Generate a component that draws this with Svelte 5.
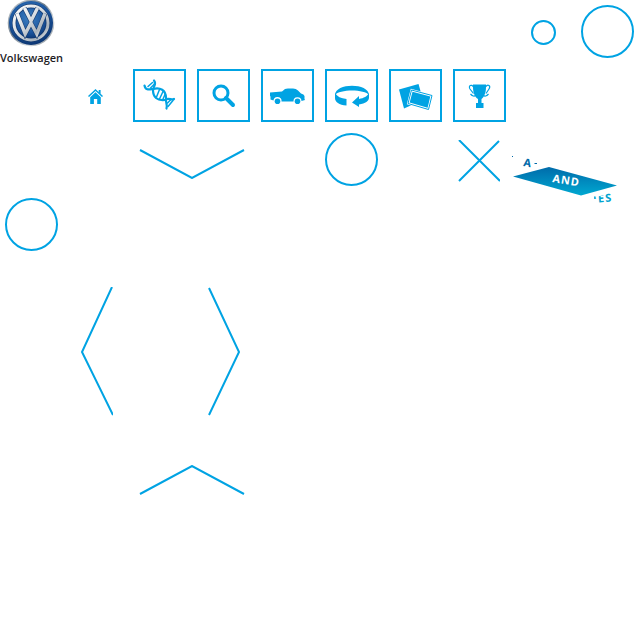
<script>
  const tiles = ['Technology', 'Search', 'Models', '360 view', 'Gallery', 'Awards'];
</script>

<main>
  <header>
    <a class="brand" href="#home">
      <svg width="62" height="47" viewBox="0 0 62 47" aria-hidden="true">
        <defs>
          <linearGradient id="rim" x2="1" y2="1">
            <stop stop-color="#d5dade" /><stop offset=".45" stop-color="#6c7b88" /><stop offset=".7" stop-color="#dfe3e6" /><stop offset="1" stop-color="#5a6670" />
          </linearGradient>
          <radialGradient id="blue" cx=".45" cy=".35" r=".7">
            <stop stop-color="#3d7fc1" /><stop offset=".6" stop-color="#1c57a0" /><stop offset="1" stop-color="#082d66" />
          </radialGradient>
          <linearGradient id="chrome" x2="1" y2="1">
            <stop stop-color="#fff" /><stop offset=".5" stop-color="#d3d9de" /><stop offset=".8" stop-color="#a9b3bc" /><stop offset="1" stop-color="#f2f4f5" />
          </linearGradient>
        </defs>
        <circle cx="31" cy="23" r="23.3" fill="url(#rim)" />
        <circle cx="31" cy="23" r="22" fill="url(#blue)" />
        <circle cx="31" cy="23" r="17" fill="url(#blue)" stroke="#12386d" stroke-width="4.4" />
        <circle cx="31" cy="23" r="17" fill="none" stroke="url(#chrome)" stroke-width="3" />
        <g fill="none" stroke-linejoin="miter" stroke-miterlimit="8">
          <path d="M24.5 8L31 21L37.5 8M17 13.5L25.2 34L31 23L36.8 34L45 13.5" stroke="#173c70" stroke-width="4.6" />
          <path d="M24.5 8L31 21L37.5 8M17 13.5L25.2 34L31 23L36.8 34L45 13.5" stroke="url(#chrome)" stroke-width="3.4" />
        </g>
      </svg>
      <span>Volkswagen</span>
    </a>
    <div class="rings">
      <button class="ring small" aria-label="Marker"></button>
      <button class="ring" aria-label="Close"></button>
    </div>
  </header>

  <nav>
    <a class="home" href="#home" aria-label="Home">
      <svg width="15" height="16" viewBox="0 0 15 16">
        <path d="M0 8.1L7.5 1L10.7 4V2H12.6V5.8L15 8.1L14 9.1L7.5 3L1 9.1Z" />
        <path d="M2.2 9.2L7.5 4.3L12.8 9.2V16H9.2V11H5.9V16H2.2Z" />
      </svg>
    </a>
    {#each tiles as name, i}
      <a class="tile" href="#{name}" aria-label={name}>
        <svg width="49" height="49" viewBox="0 0 49 49">
          {#if i === 0}
            <g fill="none" stroke="#00a3e3" stroke-linecap="round">
              <path d="M9.5 14.5C10.5 19.5 14 18.5 18 18C25 16 31 19 31 27C30 31 33 34 31.5 37.5" stroke-width="2.2" />
              <path d="M19 9.5C22 13 18.5 15 18 19C18 26 22 30 30 29C33 26 37 29.5 39 28" stroke-width="2.2" />
              <path d="M13 15.5L17.5 11.5M15.5 17L19.5 13M21.5 26L24.5 18.5M24.5 28L28 20.5M28 28L30 23.5M32.5 32L35.5 29M33 35.5L38 29.5" stroke-width="1.5" />
            </g>
          {:else if i === 1}
            <circle cx="22" cy="22" r="7" fill="none" stroke="#00a3e3" stroke-width="3" />
            <path d="M27 27L34 34" stroke="#00a3e3" stroke-width="4" stroke-linecap="round" />
          {:else if i === 2}
            <path d="M7 21.5L19 20.5L22 18Q23 17.5 25 17.5H30Q33 17.5 35 19.5L38 22.5Q41 23 41.5 25V28L42 29L38.5 30A4 4 0 0 0 30.5 30.5H18.5A4 4 0 0 0 10.5 29.5L7.5 28.5V25.5L7 25Z" />
            <circle cx="14.5" cy="30.2" r="2.8" /><circle cx="34.5" cy="30.2" r="2.8" />
          {:else if i === 3}
            <path d="M8 24C8 11.5 42 11.5 42 24C38 18 12 18 8 24Z" />
            <path d="M8 22C10 25.5 14 27.5 19.5 28V34.5C12 34 8 31 8 27Z" />
            <path d="M42 22C40 25.5 37 27 32 28V25L25 31.5L32 36V33.5C38.5 32.5 42 30 42 26.5Z" />
          {:else if i === 4}
            <path d="M8 18.5L27.5 13L32 29L13 37.5Z" />
            <path d="M20.5 19L41 24.5L37.5 38.5L17 32.5Z" fill="#fff" stroke="#fff" stroke-width="2" />
            <path d="M20.5 19L41 24.5L37.5 38.5L17 32.5Z" fill="#fff" stroke="#00a3e3" stroke-width="1" />
            <path d="M21.5 20.7L39.3 25.4L36.6 36.8L18.7 31.6Z" />
          {:else}
            <path d="M18 13.5H31V16C31 22 29 26 26.5 28V32H28.5V37H21V32H23V28C20 26 18 22 18 16Z" />
            <path d="M18.5 16C16.5 12.5 13 15 15 18L18.5 22.5M15.5 23Q18.5 26.5 21 24M30.5 16C33 12.5 36 15 34 18L31 22.5M33.5 23Q30.5 26.5 28 24" fill="none" stroke="#00a3e3" stroke-width="1.2" />
          {/if}
        </svg>
      </a>
    {/each}
  </nav>

  <section class="controls">
    <button class="down" aria-label="Down"><svg width="106" height="30" viewBox="0 0 106 30"><path class="line" d="M1 1L53 29L105 1" /></svg></button>
    <button class="ring" aria-label="Select"></button>
    <button class="cross" aria-label="Dismiss"><svg width="42" height="42" viewBox="0 0 42 42"><path class="line" d="M1 0L42 41M41 1L1 41" /></svg></button>
    <svg class="banner" width="106" height="60" viewBox="0 0 106 60">
      <defs>
        <linearGradient id="ribbon" x2="0" y2="1"><stop stop-color="#006baa" /><stop offset="1" stop-color="#00a8d1" /></linearGradient>
        <clipPath id="upper"><path d="M0 0H26V24H0Z" /></clipPath>
        <clipPath id="lower"><path d="M82 46.5H85V49H82ZM86 46.5L92 45L106 38V60H86Z" /></clipPath>
      </defs>
      <path d="M1 26.5L37 17L105 35.5L69 45.5Z" fill="url(#ribbon)" />
      <text transform="translate(40 32) rotate(9)" fill="#fff">AND</text>
      <g clip-path="url(#upper)"><text transform="translate(11 16) rotate(9)" fill="#0069a8">A</text><path d="M22.5 13H25V14H22.5ZM0 6H1V7H0Z" fill="#0069a8" /></g>
      <g clip-path="url(#lower)"><text transform="translate(81 53) rotate(-5)" fill="#00a3cf">IES</text></g>
    </svg>
  </section>

  <section class="marker"><button class="ring" aria-label="Hotspot"></button></section>

  <section class="pager">
    <button aria-label="Previous"><svg width="32" height="130" viewBox="0 0 32 130"><path class="line" d="M31 0L1 65L32 128" /></svg></button>
    <button aria-label="Next"><svg width="32" height="130" viewBox="0 0 32 130"><path class="line" d="M1 1L31 65L1 128" /></svg></button>
  </section>

  <section class="top">
    <button aria-label="Up"><svg width="106" height="30" viewBox="0 0 106 30"><path class="line" d="M1 29L53 1L105 29" /></svg></button>
  </section>
</main>

<style>
  :global(body) { margin: 0; background: #fff; }
  main { font-family: "Noto Sans", "Open Sans", sans-serif; }
  svg { display: block; fill: #00a3e3; }
  button { display: block; flex: none; padding: 0; border: 0; background: none; cursor: pointer; }
  header { display: flex; justify-content: space-between; height: 69px; }
  .brand { display: block; color: #1d1d1f; text-decoration: none; font-family: "Open Sans", sans-serif; font-size: 11px; font-weight: 600; line-height: 22px; }
  .brand span { display: block; }
  .rings { display: flex; gap: 25px; padding: 5px 6px 0 0; }
  .ring { box-sizing: border-box; width: 53px; height: 53px; border: 2px solid #00a3e3; border-radius: 50%; }
  .small { width: 25px; height: 25px; margin-top: 15px; }
  nav { display: flex; align-items: center; gap: 11px; padding-left: 88px; }
  .home { margin-right: 19px; }
  .tile { border: 2px solid #00a3e3; }
  .line { fill: none; stroke: #00a3e3; stroke-width: 2; }
  .controls { display: flex; align-items: flex-start; padding: 11px 0 0 139px; }
  .controls .ring { margin: 0 80px; }
  .down { margin-top: 16px; }
  .cross { margin-top: 7px; }
  .banner { flex: none; margin: 17px 0 -17px 12px; }
  .banner text { font-size: 11px; font-weight: 700; letter-spacing: 1px; }
  .marker { padding: 5px; }
  .pager { display: flex; gap: 95px; padding: 31px 0 0 81px; }
  .top { padding: 48px 0 0 139px; }
</style>
